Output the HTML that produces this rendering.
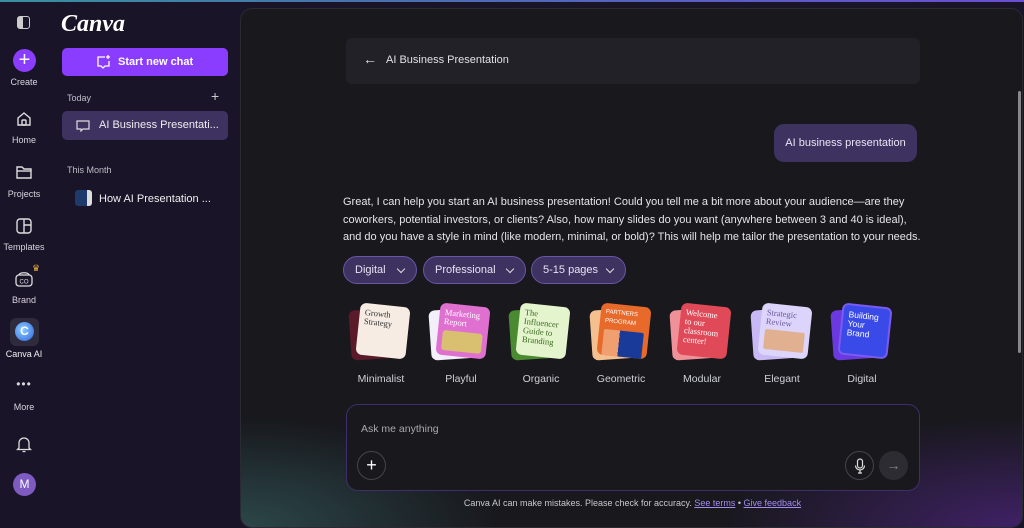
<!DOCTYPE html>
<html><head><meta charset="utf-8"><style>
*{box-sizing:border-box;margin:0;padding:0}
body{width:1024px;height:517px;overflow:hidden;background:#1a1428;font-family:"Liberation Sans",sans-serif;position:relative;color:#e8e6ee}
.topline{position:absolute;left:0;top:0;width:1024px;height:2px;background:linear-gradient(90deg,#3a8fa0,#4a6fb0 40%,#6a4fd0 100%)}
.rail{position:absolute;left:0;top:2px;width:50px;bottom:0}
.ri{position:absolute;left:0;width:48px;text-align:center;font-size:9px;color:#d8d4e0}
.side{position:absolute;left:50px;top:2px;width:190px;bottom:0}
.main{position:absolute;left:240px;top:8px;width:783px;height:520px;border-radius:12px;background:#18181d;overflow:hidden;border:1px solid #2a2a32}
.glow{position:absolute;left:0;right:0;bottom:0;height:140px;background:radial-gradient(ellipse 260px 110px at 0% 100%,rgba(60,110,110,.55),transparent),radial-gradient(ellipse 300px 110px at 100% 100%,rgba(90,40,150,.6),transparent)}
.hdr{position:absolute;left:105px;top:29px;width:574px;height:46px;background:#212127;border-radius:6px;font-size:11px;color:#e0e0e6}
.bubble{position:absolute;left:533px;top:115px;width:143px;height:38px;background:#3e3360;border-radius:10px;font-size:11px;line-height:38px;text-align:center;color:#e8e4f4}
.msg{position:absolute;left:102px;top:185px;width:578px;font-size:11px;line-height:17.5px;color:#e4e4ea}
.pill{position:absolute;top:247px;height:28px;border:1px solid #6a55a8;background:#3e3360;border-radius:14px;font-size:11px;line-height:26px;padding-left:11px;color:#e6e2f2}
.pill:after{content:"";position:absolute;right:12px;top:9px;width:5px;height:5px;border-right:1.5px solid #ddd;border-bottom:1.5px solid #ddd;transform:rotate(45deg)}
.th{position:absolute;top:295px;width:64px;height:60px}
.th .b{position:absolute;left:3px;top:5px;width:50px;height:50px;border-radius:6px;transform:rotate(-4deg)}
.th .f{position:absolute;left:11px;top:1px;width:50px;height:52px;border-radius:6px;transform:rotate(6deg);font-family:"Liberation Serif",serif;font-size:8.5px;line-height:9px;padding:5px;overflow:hidden}
.lbl{position:absolute;top:364px;font-size:10.5px;color:#d0d0d8;width:80px;text-align:center}
.input{position:absolute;left:105px;top:395px;width:574px;height:87px;border:1px solid #3e2f6a;border-radius:12px;background:#18181d}
.circ{position:absolute;width:29px;height:29px;border-radius:50%;border:1px solid #44444c}
.foot{position:absolute;left:0;width:783px;top:489px;text-align:center;font-size:9px;color:#c8c8d0}
.foot a{color:#a48cf0;text-decoration:underline}
</style></head><body>
<div class="topline"></div>
<div class="rail">
 <div style="position:absolute;left:17px;top:14px;width:13px;height:13px;border:1.5px solid #ccc;border-radius:3px;background:linear-gradient(90deg,#ccc 45%,transparent 45%)"></div>
 <div style="position:absolute;left:13px;top:47px;width:23px;height:23px;border-radius:50%;background:#8b3dff;color:#fff;font-size:20px;line-height:22px;text-align:center">+</div>
 <div class="ri" style="top:75px">Create</div>
 <svg style="position:absolute;left:15px;top:108px" width="18" height="18" viewBox="0 0 18 18" fill="none" stroke="#ddd" stroke-width="1.4"><path d="M3 8 9 3l6 5v7H3z"/><rect x="7" y="10" width="4" height="5" rx="1"/></svg>
 <div class="ri" style="top:133px">Home</div>
 <svg style="position:absolute;left:15px;top:162px" width="18" height="16" viewBox="0 0 18 16" fill="none" stroke="#ddd" stroke-width="1.4"><path d="M2 3h5l2 2h7v9H2z"/><path d="M2 7h14"/></svg>
 <div class="ri" style="top:187px">Projects</div>
 <svg style="position:absolute;left:15px;top:215px" width="18" height="18" viewBox="0 0 18 18" fill="none" stroke="#ddd" stroke-width="1.4"><rect x="2" y="2" width="14" height="14" rx="3"/><path d="M9 2v14M9 8h7"/></svg>
 <div class="ri" style="top:240px">Templates</div>
 <svg style="position:absolute;left:14px;top:268px" width="20" height="18" viewBox="0 0 20 18" fill="none" stroke="#ddd" stroke-width="1.3"><rect x="2" y="5" width="16" height="11" rx="3"/><path d="M5 5c0-3 10-3 10 0"/><text x="10" y="13.5" font-size="6" fill="#ddd" stroke="none" text-anchor="middle" font-family="Liberation Sans">CO</text></svg>
 <div style="position:absolute;left:32px;top:261px;color:#e8b040;font-size:9px">♛</div>
 <div class="ri" style="top:293px">Brand</div>
 <div style="position:absolute;left:10px;top:316px;width:29px;height:28px;border-radius:6px;background:#2e2c3c"><div style="position:absolute;left:5px;top:4px;width:19px;height:19px;border-radius:50%;background:radial-gradient(circle at 40% 40%,#8ad0ff,#3060e0);color:#fff;font-size:12px;font-weight:bold;line-height:19px;text-align:center">C</div></div>
 <div class="ri" style="top:347px;color:#f0f0f4">Canva AI</div>
 <div class="ri" style="top:375px;font-size:12px;letter-spacing:1px">•••</div>
 <div class="ri" style="top:400px">More</div>
 <svg style="position:absolute;left:16px;top:434px" width="16" height="17" viewBox="0 0 16 17" fill="none" stroke="#ddd" stroke-width="1.3"><path d="M3 12V7a5 5 0 0 1 10 0v5l1.5 1.5h-13z"/><path d="M6.5 15.5h3"/></svg>
 <div style="position:absolute;left:13px;top:471px;width:23px;height:23px;border-radius:50%;background:#7d5bc0;color:#fff;font-size:12px;line-height:23px;text-align:center">M</div>
</div>
<div class="side">
 <div style="position:absolute;left:11px;top:9px;font-family:'Liberation Serif',serif;font-style:italic;font-size:24px;color:#fff;font-weight:bold">Canva</div>
 <div style="position:absolute;left:12px;top:46px;width:166px;height:28px;background:#8b3dff;border-radius:5px;font-size:11px;font-weight:bold;color:#fff;line-height:28px;padding-left:56px">Start new chat
  <svg style="position:absolute;left:34px;top:7px" width="15" height="14" viewBox="0 0 15 14" fill="none" stroke="#fff" stroke-width="1.3"><path d="M9 2H2v9h3l2 2 2-2h4V6"/><path d="M12 0v4M10 2h4"/></svg></div>
 <div style="position:absolute;left:17px;top:91px;font-size:9px;color:#c0bcc8">Today</div>
 <div style="position:absolute;left:161px;top:86px;font-size:14px;color:#ccc">+</div>
 <div style="position:absolute;left:12px;top:109px;width:166px;height:29px;background:#3e3360;border-radius:5px;font-size:11px;line-height:29px;padding-left:37px;color:#eee">AI Business Presentati...
  <svg style="position:absolute;left:14px;top:9px" width="14" height="12" viewBox="0 0 14 12" fill="none" stroke="#ddd" stroke-width="1.2"><path d="M1 1h12v8H7l-2 2V9H1z"/></svg></div>
 <div style="position:absolute;left:17px;top:163px;font-size:9px;color:#c0bcc8">This Month</div>
 <div style="position:absolute;left:25px;top:188px;width:17px;height:16px;border-radius:3px;background:linear-gradient(90deg,#1e3a6a 70%,#ddd 70%)"></div>
 <div style="position:absolute;left:49px;top:191px;font-size:11px;color:#eee">How AI Presentation ...</div>
</div>
<div class="main">
 <div class="glow"></div>
 <div style="position:absolute;left:777px;top:82px;width:3px;height:262px;background:#888;border-radius:2px"></div>
 <div class="hdr"><span style="position:absolute;left:17px;top:13px;font-size:14px">←</span><span style="position:absolute;left:40px;top:16px">AI Business Presentation</span></div>
 <div class="bubble">AI business presentation</div>
 <div class="msg">Great, I can help you start an AI business presentation! Could you tell me a bit more about your audience—are they coworkers, potential investors, or clients? Also, how many slides do you want (anywhere between 3 and 40 is ideal), and do you have a style in mind (like modern, minimal, or bold)? This will help me tailor the presentation to your needs.</div>
 <div class="pill" style="left:102px;width:74px">Digital</div>
 <div class="pill" style="left:182px;width:103px">Professional</div>
 <div class="pill" style="left:290px;width:95px">5-15 pages</div>

 <div class="th" style="left:106px"><div class="b" style="background:#5a1a2a"></div><div class="f" style="background:#f6ece4;color:#333">Growth Strategy</div></div>
 <div class="th" style="left:186px"><div class="b" style="background:#f2eefa"></div><div class="f" style="background:#e070d0;color:#fff">Marketing Report<div style="margin-top:4px;height:20px;background:#d8c070;border-radius:3px"></div></div></div>
 <div class="th" style="left:266px"><div class="b" style="background:#4a8a30"></div><div class="f" style="background:#e4f4cc;color:#3a6a20">The Influencer Guide to Branding</div></div>
 <div class="th" style="left:347px"><div class="b" style="background:#f4c090"></div><div class="f" style="background:#e86a2a;color:#fff;font-family:'Liberation Sans';font-size:6px">PARTNERS PROGRAM<div style="margin-top:3px;height:30px;background:linear-gradient(90deg,#f0a070 40%,#1a3a9a 40%);border-radius:2px"></div></div></div>
 <div class="th" style="left:427px"><div class="b" style="background:#f09098"></div><div class="f" style="background:#e04a58;color:#fff">Welcome to our classroom center!</div></div>
 <div class="th" style="left:508px"><div class="b" style="background:#c8b8f4"></div><div class="f" style="background:#dcd4fa;color:#6a5aa0">Strategic Review<div style="margin-top:3px;height:20px;background:#e0b090;border-radius:2px"></div></div></div>
 <div class="th" style="left:588px"><div class="b" style="background:#6a3ae0"></div><div class="f" style="background:#3a4ae8;color:#fff;font-family:'Liberation Sans';border:2px solid #7a5af0">Building Your Brand</div></div>

 <div class="lbl" style="left:100px">Minimalist</div>
 <div class="lbl" style="left:180px">Playful</div>
 <div class="lbl" style="left:260px">Organic</div>
 <div class="lbl" style="left:340px">Geometric</div>
 <div class="lbl" style="left:421px">Modular</div>
 <div class="lbl" style="left:501px">Elegant</div>
 <div class="lbl" style="left:581px">Digital</div>

 <div class="input">
  <div style="position:absolute;left:14px;top:18px;font-size:10.5px;color:#aaa">Ask me anything</div>
  <div class="circ" style="left:10px;top:46px;color:#fff;font-size:18px;line-height:26px;text-align:center">+</div>
  <div class="circ" style="left:498px;top:46px"><svg style="position:absolute;left:8px;top:6px" width="12" height="16" viewBox="0 0 12 16" fill="none" stroke="#ddd" stroke-width="1.2"><rect x="3.5" y="1" width="5" height="9" rx="2.5"/><path d="M1.5 7.5a4.5 4.5 0 0 0 9 0M6 12v3M4 15h4"/></svg></div>
  <div class="circ" style="left:532px;top:46px;background:#2c2c32;border-color:#2c2c32;color:#888;font-size:14px;line-height:26px;text-align:center">→</div>
 </div>
 <div class="foot">Canva AI can make mistakes. Please check for accuracy. <a>See terms</a> • <a>Give feedback</a></div>
</div>
</body></html>
